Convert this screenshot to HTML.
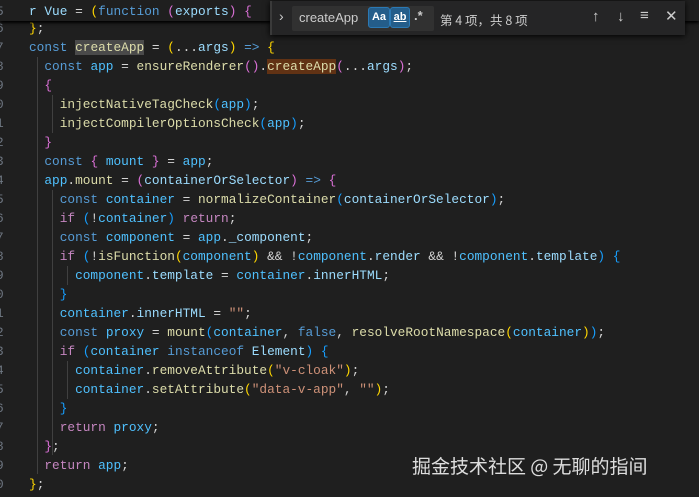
<!DOCTYPE html><html><head><style>
body{margin:0;width:699px;height:497px;overflow:hidden;background:#1f1f1f;font-family:"Liberation Mono",monospace;font-size:12.8px;position:relative}
.l{position:absolute;left:0;height:19px;line-height:19px;white-space:pre;color:#d4d4d4}
.n{position:absolute;left:-4px;color:#6e7681;width:10px}
.c{position:absolute;left:29px}
.k{color:#569cd6}.f{color:#dcdcaa}.v{color:#9cdcfe}.C{color:#4fc1ff}.p{color:#c586c0}.s{color:#ce9178}
.y{color:#ffd700}.m{color:#da70d6}.b{color:#179fff}
.g{position:absolute;width:1px;background:#404040}
</style></head><body>
<div class="g" style="left:37px;top:57px;height:417px"></div>
<div class="g" style="left:52px;top:95px;height:38px"></div>
<div class="g" style="left:52px;top:190px;height:265px"></div>
<div class="g" style="left:67px;top:266px;height:19px"></div>
<div class="g" style="left:67px;top:361px;height:38px"></div>
<div id="code"></div>
<div style="position:absolute;left:0;top:0;width:699px;height:21px;background:#1f1f1f;box-shadow:0 2px 3px #000"></div>
<div class="l" style="top:2px"><span class="n">5</span><span class="c"><span class="v">r</span> <span class="v">Vue</span> = <span class="y">(</span><span class="k">function</span> <span class="m">(</span><span class="v">exports</span><span class="m">)</span> <span class="m">{</span></span></div>
<div style="position:absolute;left:270px;top:1px;width:413px;height:34px;background:#252526;box-shadow:0 1px 6px #000;border-left:2px solid #3a3a3a;font-family:'Liberation Sans','Noto Sans CJK SC',sans-serif;font-size:13px;color:#ccc">
<span style="position:absolute;left:7px;top:7px;font-size:14px">&#8250;</span>
<div style="position:absolute;left:20px;top:5px;width:142px;height:25px;background:#313131;border-radius:2px"></div>
<span style="position:absolute;left:27px;top:9px">createApp</span>
<span style="position:absolute;left:96px;top:6px;width:20px;height:19px;background:#245d8a;border:1px solid #2b79b4;border-radius:3px;font-size:11px;text-align:center;line-height:19px;color:#fff;font-weight:bold">Aa</span>
<span style="position:absolute;left:118px;top:6px;width:18px;height:19px;background:#245d8a;border:1px solid #2b79b4;border-radius:3px;font-size:11px;text-align:center;line-height:18px;color:#fff;font-weight:bold;text-decoration:underline">ab</span>
<span style="position:absolute;left:142px;top:7px;font-weight:bold">.*</span>
<span style="position:absolute;left:168px;top:9px;font-family:'Noto Sans CJK SC',sans-serif;font-size:12.5px">第 4 项，共 8 项</span>
<span style="position:absolute;left:320px;top:7px;font-size:15px">&#8593;</span>
<span style="position:absolute;left:345px;top:7px;font-size:15px">&#8595;</span>
<span style="position:absolute;left:368px;top:6px;font-size:15px">&#8801;</span>
<span style="position:absolute;left:393px;top:6px;font-size:15px">&#10005;</span>
</div>
<div style="position:absolute;left:412px;top:452px;color:#fff;opacity:.85;font-family:'Noto Sans CJK SC',sans-serif;font-size:19px">掘金技术社区 @ 无聊的指间</div>
<script>
const L=[
['6','<span class="y">}</span>;'],
['7','<span class="k">const</span> <span class="f" style="background:#4a4a4a">createApp</span> = <span class="y">(</span>...<span class="v">args</span><span class="y">)</span> <span class="k">=&gt;</span> <span class="y">{</span>'],
['8','  <span class="k">const</span> <span class="C">app</span> = <span class="f">ensureRenderer</span><span class="m">()</span>.<span class="f" style="background:#613214">createApp</span><span class="m">(</span>...<span class="v">args</span><span class="m">)</span>;'],
['9','  <span class="m">{</span>'],
['0','    <span class="f">injectNativeTagCheck</span><span class="b">(</span><span class="C">app</span><span class="b">)</span>;'],
['1','    <span class="f">injectCompilerOptionsCheck</span><span class="b">(</span><span class="C">app</span><span class="b">)</span>;'],
['2','  <span class="m">}</span>'],
['3','  <span class="k">const</span> <span class="m">{</span> <span class="C">mount</span> <span class="m">}</span> = <span class="C">app</span>;'],
['4','  <span class="C">app</span>.<span class="f">mount</span> = <span class="m">(</span><span class="v">containerOrSelector</span><span class="m">)</span> <span class="k">=&gt;</span> <span class="m">{</span>'],
['5','    <span class="k">const</span> <span class="C">container</span> = <span class="f">normalizeContainer</span><span class="b">(</span><span class="v">containerOrSelector</span><span class="b">)</span>;'],
['6','    <span class="p">if</span> <span class="b">(</span>!<span class="C">container</span><span class="b">)</span> <span class="p">return</span>;'],
['7','    <span class="k">const</span> <span class="C">component</span> = <span class="C">app</span>.<span class="v">_component</span>;'],
['8','    <span class="p">if</span> <span class="b">(</span>!<span class="f">isFunction</span><span class="y">(</span><span class="C">component</span><span class="y">)</span> &amp;&amp; !<span class="C">component</span>.<span class="v">render</span> &amp;&amp; !<span class="C">component</span>.<span class="v">template</span><span class="b">)</span> <span class="b">{</span>'],
['9','      <span class="C">component</span>.<span class="v">template</span> = <span class="C">container</span>.<span class="v">innerHTML</span>;'],
['0','    <span class="b">}</span>'],
['1','    <span class="C">container</span>.<span class="v">innerHTML</span> = <span class="s">""</span>;'],
['2','    <span class="k">const</span> <span class="C">proxy</span> = <span class="f">mount</span><span class="b">(</span><span class="C">container</span>, <span class="k">false</span>, <span class="f">resolveRootNamespace</span><span class="y">(</span><span class="C">container</span><span class="y">)</span><span class="b">)</span>;'],
['3','    <span class="p">if</span> <span class="b">(</span><span class="C">container</span> <span class="k">instanceof</span> <span class="v">Element</span><span class="b">)</span> <span class="b">{</span>'],
['4','      <span class="C">container</span>.<span class="f">removeAttribute</span><span class="y">(</span><span class="s">"v-cloak"</span><span class="y">)</span>;'],
['5','      <span class="C">container</span>.<span class="f">setAttribute</span><span class="y">(</span><span class="s">"data-v-app"</span>, <span class="s">""</span><span class="y">)</span>;'],
['6','    <span class="b">}</span>'],
['7','    <span class="p">return</span> <span class="C">proxy</span>;'],
['8','  <span class="m">}</span>;'],
['9','  <span class="p">return</span> <span class="C">app</span>;'],
['0','<span class="y">}</span>;']];
let h='';L.forEach((x,i)=>{h+='<div class="l" style="top:'+(18.5+i*19)+'px"><span class="n">'+x[0]+'</span><span class="c">'+x[1]+'</span></div>'});
document.getElementById('code').innerHTML=h;
</script>
</body></html>
